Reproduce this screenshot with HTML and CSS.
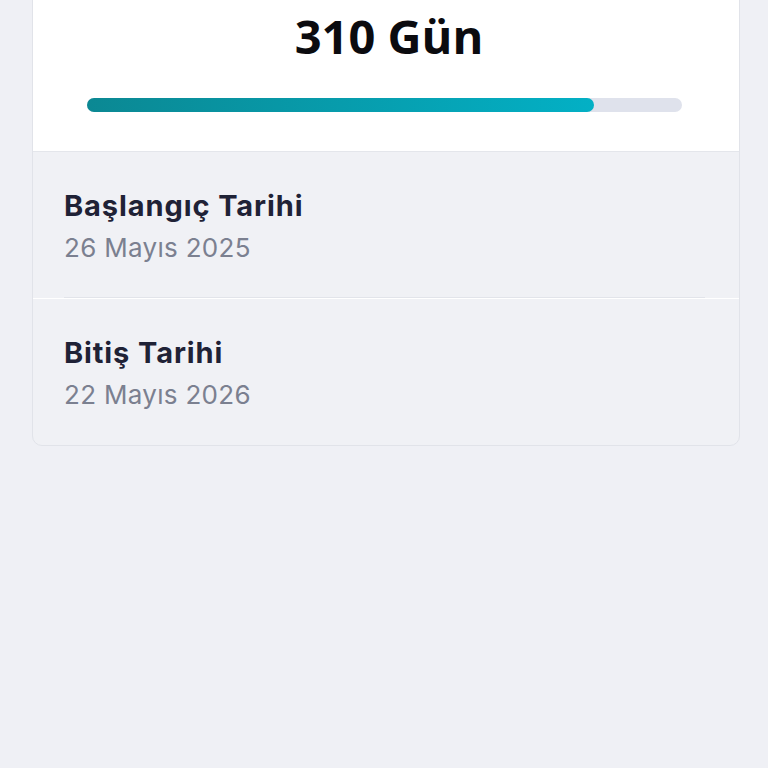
FILE: index.html
```html
<!DOCTYPE html>
<html lang="tr">
<head>
    <meta charset="UTF-8">
    <title>Süre</title>
    <link rel="stylesheet" href="styles.css">
</head>
<body>

<div class="card">
    <div class="summary">
        <div class="days">310 Gün</div>
        <div class="progress">
            <div class="progress-fill" style="width: 85.2%"></div>
        </div>
    </div>

    <div class="date-row">
        <div class="date-label">Başlangıç Tarihi</div>
        <div class="date-value">26 Mayıs 2025</div>
    </div>
    <div class="date-row">
        <div class="date-label">Bitiş Tarihi</div>
        <div class="date-value">22 Mayıs 2026</div>
    </div>
</div>

</body>
</html>
```

FILE: styles.css
```css
body, html {
    margin: 0;
    padding: 0;
    background-color: #eff0f5;
    font-family: Inter, "Noto Sans", sans-serif;
}

.card {
    width: 708px;
    margin: -20px 0 0 32px;
    box-sizing: border-box;
    border: 1px solid #e1e3e9;
    border-radius: 10px;
    background-color: #f0f1f5;
    overflow: hidden;
}

.summary {
    background-color: #ffffff;
    padding: 27px 57px 39px 54px;
    border-bottom: 1px solid #e4e6eb;
}

.days {
    font-family: "Open Sans", sans-serif;
    font-weight: 700;
    font-size: 47px;
    line-height: 56px;
    text-align: center;
    color: #0b0b0f;
    padding-left: 9px;
    margin-bottom: 34px;
}

.progress {
    height: 14px;
    border-radius: 7px;
    background-color: #dfe2ec;
}

.progress-fill {
    height: 100%;
    border-radius: 7px;
    background: linear-gradient(90deg, #0b8893, #03b0c5);
}

.date-row {
    position: relative;
    padding: 31px 31px 32px 31px;
}

.date-row + .date-row {
    border-top: 1px solid #ffffff;
}

.date-row + .date-row::before {
    content: "";
    position: absolute;
    top: -2px;
    left: 31px;
    right: 34px;
    height: 1px;
    background-color: #e2e4ea;
}

.date-label {
    font-weight: 700;
    font-size: 29px;
    line-height: 46px;
    letter-spacing: 0.9px;
    color: #1f2236;
}

.date-value {
    font-size: 26px;
    line-height: 37px;
    letter-spacing: 0.3px;
    color: #7b8090;
}
```
